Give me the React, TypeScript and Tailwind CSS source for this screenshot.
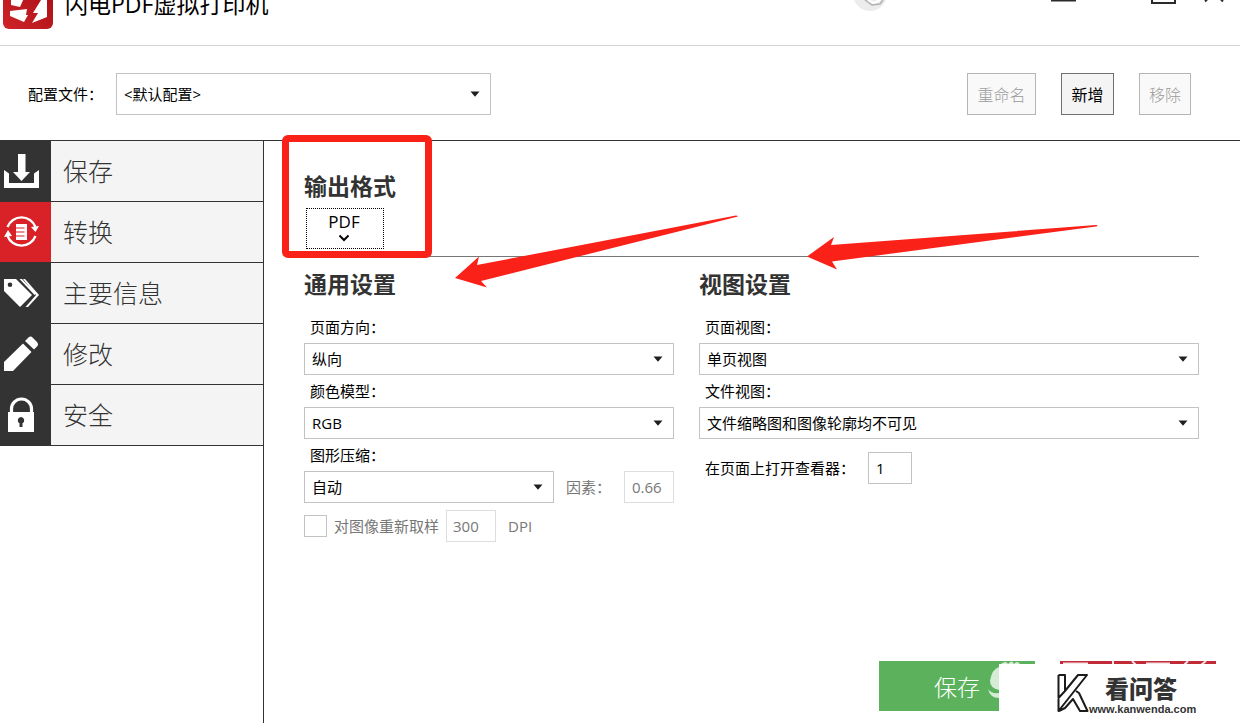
import type { ReactNode } from "react";

function Caret() {
  return (
    <svg viewBox="0 0 10 6" className="pointer-events-none absolute right-[11px] top-1/2 h-[6px] w-[10px] -translate-y-1/2" aria-hidden="true">
      <path d="M0.5 0.5h9L5 5.8z" fill="#1f1f1f" />
    </svg>
  );
}

function Select({ id, value, box, label }: { id: string; value: string; box: string; label?: string }) {
  return (
    <div className={`relative ${box}`}>
      <select
        id={id}
        aria-label={label}
        className="block h-full w-full appearance-none rounded-none border border-[#c3c3c3] bg-white pl-[7px] pr-7 text-[15px] text-black"
      >
        <option>{value}</option>
      </select>
      <Caret />
    </div>
  );
}

function Field({ id, label, value }: { id: string; label: string; value: string }) {
  return (
    <div>
      <label htmlFor={id} className="flex h-8 items-center pl-[6px]">{label}</label>
      <Select id={id} value={value} box="h-8" />
    </div>
  );
}

function Heading({ children }: { children: ReactNode }) {
  return <h2 className="text-[23px] font-bold leading-[28px] text-[#333]">{children}</h2>;
}

const tabs: { label: string; active?: boolean; icon: ReactNode }[] = [
  {
    label: "保存",
    icon: (
      <>
        <path d="M14 1h7.500v18H26L17.500 28 9 19h5z" />
        <path d="M0 17l5 3.500V30h25v-9.500l5-3.500v18H0z" />
      </>
    ),
  },
  {
    label: "转换",
    active: true,
    icon: (
      <>
        <path d="M3.500 13A15 15 0 0 1 31.500 13M31.500 22A15 15 0 0 1 3.500 22" fill="none" stroke="white" strokeWidth="2.300" />
        <path d="M27 13l8-1-3.500 6zM0 23l8-1-4-6z" />
        <path d="M12 10h11v16H12z" />
        <path d="M12 14h8.500M12 18h8.500M12 22h8.500" stroke="#d92128" strokeWidth="1.200" />
      </>
    ),
  },
  {
    label: "主要信息",
    icon: (
      <>
        <path fillRule="evenodd" d="M0 4h12L28 20 16 32 0 16zM6 7.500a2.300 2.300 0 1 0 0 4.600 2.300 2.300 0 0 0 0-4.600z" />
        <path d="M15.500 4H18L32 18.500l-1.500 1.500z" />
        <path d="M19 4h2l14 16-11 12h-2.500L32 20z" />
      </>
    ),
  },
  {
    label: "修改",
    icon: (
      <>
        <path d="M0 26L19 7.500l8.500 8.500L9 35H0z" />
        <path d="M21 5l3.500-3.500q2-2 4.500.5l4 4q2 2.500 0 4.500L30 13.500z" />
      </>
    ),
  },
  {
    label: "安全",
    icon: (
      <>
        <path d="M7.500 16v-4a10 10 0 0 1 20 0v4" fill="none" stroke="white" strokeWidth="3.200" />
        <path fillRule="evenodd" d="M4 15h26v20H4zM17 20a3.300 3.300 0 0 0-1.500 6.200V30h3v-3.800A3.300 3.300 0 0 0 17 20z" />
      </>
    ),
  },
];

function Header() {
  return (
    <header className="h-[46px] overflow-hidden border-b border-[#d5d5d5]">
      <div className="-mt-[21px] flex h-[50px] items-center pl-[3px] pr-4">
        <svg viewBox="0 0 50 50" className="h-[50px] w-[50px] shrink-0" aria-hidden="true">
          <defs>
            <linearGradient id="logo" x1="0" y1="1" x2="1" y2="0">
              <stop offset="0" stopColor="#d02428" />
              <stop offset="1" stopColor="#a30d14" />
            </linearGradient>
          </defs>
          <rect width="50" height="50" rx="6" fill="url(#logo)" />
          <path d="M8 8h18l-9 20-9-2z" fill="#fff" />
          <path d="M7 32l17-2-1 6h2l-4 7L7 37z" fill="#fff" />
          <path d="M40 8h4v30L29 44l6-10h-5l8-13z" fill="#fff" />
        </svg>
        <h1 className="ml-3 whitespace-nowrap text-[23px] leading-[30px] text-black">闪电PDF虚拟打印机</h1>
        <div className="ml-auto flex items-center">
          <svg viewBox="0 0 34 34" className="-mt-5 h-[34px] w-[34px]" aria-hidden="true">
            <circle cx="17" cy="17" r="17" fill="#ececec" />
            <path d="M12 23l7 5 8-1 3-4" fill="none" stroke="#b0b0b0" strokeWidth="1.500" />
            <path d="M15 23l6 3 6-3" fill="none" stroke="#fff" strokeWidth="2" />
          </svg>
          <button type="button" aria-label="最小化" className="ml-[164px] h-[27px] w-[25px]">
            <svg viewBox="0 0 25 27" className="h-[27px] w-[25px]" aria-hidden="true"><path d="M0 9.500h25" stroke="#2b2b2b" strokeWidth="2" /></svg>
          </button>
          <button type="button" aria-label="最大化" className="ml-[75px] h-[27px] w-[25px]">
            <svg viewBox="0 0 25 27" className="h-[27px] w-[25px] overflow-visible" aria-hidden="true"><path d="M1-11h23v23H1z" fill="none" stroke="#2b2b2b" strokeWidth="2" /></svg>
          </button>
          <button type="button" aria-label="关闭" className="ml-7 h-[27px] w-[20px]">
            <svg viewBox="0 0 20 27" className="h-[27px] w-[20px] overflow-visible" aria-hidden="true"><path d="M1 10.500L20-9M19 10.500L0-9" stroke="#2b2b2b" strokeWidth="2" /></svg>
          </button>
        </div>
      </div>
    </header>
  );
}

function Annotations() {
  return (
    <>
      <div className="pointer-events-none absolute left-[18px] -top-[6px] h-[123px] w-[150px] rounded-[6px] border-[7px] border-[#fa2119]" />
      <svg viewBox="264 141 850 160" className="pointer-events-none absolute left-0 top-0 h-[160px] w-[850px]" aria-hidden="true">
        <g fill="#fa2119">
          <path d="M455 278L479 256.500 477 265 736 215.500q4 0 0 1.500L481 281l6 6.500z" />
          <path d="M807 256.500L834 237l-3 8L1096 225q3 .5 0 1.500L832 261.500l5 8z" />
        </g>
      </svg>
    </>
  );
}

function Watermark() {
  return (
    <div className="absolute bottom-0 right-0 flex h-[62px] w-[241px] items-start bg-white pl-[58px] pt-[9px]">
      <svg viewBox="0 0 32 40" className="h-[40px] w-[32px] shrink-0" aria-hidden="true">
        <path d="M1.500 2H8v16L21 2h9L1.500 38V26M1.500 2v23L8 18M2 38l6-3 8-9 7 12h7.500L22 20l-3-2" fill="none" stroke="#1b1b1b" strokeWidth="2" strokeLinejoin="round" />
      </svg>
      <div className="flex flex-col">
        <span className="ml-4 whitespace-nowrap font-['Noto_Sans_CJK_SC'] text-[24px] font-black leading-[30px] text-[#333]">看问答</span>
        <span className="whitespace-nowrap font-['Liberation_Sans'] text-[11px] font-bold leading-[12px] text-[#333]">www.kanwenda.com</span>
      </div>
    </div>
  );
}

export default function App() {
  return (
    <div className="flex min-h-screen flex-col bg-white font-['Open_Sans','Noto_Sans_CJK_SC',sans-serif] text-[15px] text-black">
      <Header />
      <div className="flex h-[95px] items-center border-b border-[#333] pl-7 pr-[49px] pt-[2px]">
        <label htmlFor="profile" className="w-[88px] shrink-0 whitespace-nowrap">配置文件：</label>
        <Select id="profile" value="<默认配置>" box="h-[42px] w-[375px]" />
        <div className="ml-auto flex gap-[25px]">
          <button type="button" disabled className="h-[42px] w-[69px] border border-[#b5b5b5] bg-[#f9f9f9] pt-[2px] text-[16px] font-light text-[#999]">重命名</button>
          <button type="button" className="h-[42px] w-[53px] border border-[#707070] bg-[#f4f4f4] pt-[2px] text-[16px]">新增</button>
          <button type="button" disabled className="h-[42px] w-[52px] border border-[#b5b5b5] bg-[#f9f9f9] pt-[2px] text-[16px] font-light text-[#999]">移除</button>
        </div>
      </div>
      <div className="flex flex-1">
        <nav className="mb-[3px] w-[264px] shrink-0 border-r border-[#333]">
          {tabs.map((t) => (
            <button key={t.label} type="button" className="flex h-[61px] w-full items-stretch border-b border-[#333] bg-[#f4f4f4] text-left">
              <span className={`flex w-[51px] items-center pl-1 ${t.active ? "bg-[#d92128]" : "bg-[#333]"}`}>
                <svg viewBox="0 0 35 36" className="h-9 w-[35px]" fill="#fff" aria-hidden="true">{t.icon}</svg>
              </span>
              <span className="flex items-center pl-3 pt-px text-[25px] font-light text-[#333]">{t.label}</span>
            </button>
          ))}
        </nav>
        <main className="relative flex min-w-0 flex-1 flex-col">
          <div className="pl-10 pr-[41px] pt-[31px]">
            <Heading>输出格式</Heading>
            <button type="button" className="ml-[2px] mt-2 flex h-[41px] w-[78px] flex-col items-center border border-dotted border-black pr-[2px] pt-[3px] text-[17px] leading-[20px]">
              PDF
              <svg viewBox="0 0 12 8" className="mt-[2px] h-2 w-3" aria-hidden="true"><path d="M1.500 1.500L6 6l4.500-4.500" fill="none" stroke="#000" strokeWidth="2" /></svg>
            </button>
            <hr className="mt-[7px] border-[#777]" />
            <div className="mt-[13px] grid grid-cols-[37fr_50fr] gap-[25px]">
              <section>
                <Heading>通用设置</Heading>
                <div className="mt-[13px]">
                  <Field id="orientation" label="页面方向：" value="纵向" />
                  <Field id="color" label="颜色模型：" value="RGB" />
                  <label htmlFor="compression" className="flex h-8 items-center pl-[6px]">图形压缩：</label>
                  <div className="flex items-center text-[#777]">
                    <Select id="compression" value="自动" box="h-8 flex-1" />
                    <label htmlFor="factor" className="w-[70px] whitespace-nowrap pl-3">因素：</label>
                    <input id="factor" defaultValue="0.66" className="h-8 w-[50px] border border-[#ddd] pl-[7px]" />
                  </div>
                  <div className="mt-[7px] flex items-center text-[#777]">
                    <input id="resample" type="checkbox" className="h-[22px] w-[23px] appearance-none border border-[#c3c3c3] bg-white" />
                    <label htmlFor="resample" className="w-[119px] whitespace-nowrap pl-[7px]">对图像重新取样</label>
                    <input id="dpi" aria-label="DPI" defaultValue="300" className="h-8 w-[50px] border border-[#ddd] pl-[6px]" />
                    <label htmlFor="dpi" className="pl-3">DPI</label>
                  </div>
                </div>
              </section>
              <section>
                <Heading>视图设置</Heading>
                <div className="mt-[13px]">
                  <Field id="pageview" label="页面视图：" value="单页视图" />
                  <Field id="fileview" label="文件视图：" value="文件缩略图和图像轮廓均不可见" />
                  <div className="mt-[13px] flex items-center">
                    <label htmlFor="openpage" className="w-[169px] whitespace-nowrap pl-[6px]">在页面上打开查看器：</label>
                    <input id="openpage" defaultValue="1" className="h-8 w-[44px] border border-[#c3c3c3] pl-[7px]" />
                  </div>
                </div>
              </section>
            </div>
          </div>
          <footer className="mt-auto flex justify-end gap-[25px] pb-[15px] pr-6 pt-6">
            <button type="button" className="relative h-[50px] w-[156px] bg-[#5cb25c] pt-[2px] text-[23px] font-light text-white">
              保存
              <svg viewBox="0 0 50 50" className="absolute right-0 top-0 h-[50px] w-[50px]" aria-hidden="true">
                <path d="M14 6Q7 8 5 20q0 7 9 9zM3 28q2 9 11 9v-5Q6 33 3 28z" fill="#d6ecd6" />
                <path d="M16 3q5-4 7 0 4-5 6 0 3-4 6 0z" fill="#d6ecd6" />
              </svg>
            </button>
            <button type="button" aria-label="取消" className="h-[50px] w-[156px] bg-[#c12a37]">
              <svg viewBox="0 0 156 50" className="h-[50px] w-[156px]" aria-hidden="true">
                <path d="M3 2.500h25M53 0v4M72 0l4 4M86 2.500h24M128 0l-4 4M146 0l-5 4" stroke="#f6e4e6" strokeWidth="2" />
              </svg>
            </button>
          </footer>
          <Watermark />
          <Annotations />
        </main>
      </div>
    </div>
  );
}
